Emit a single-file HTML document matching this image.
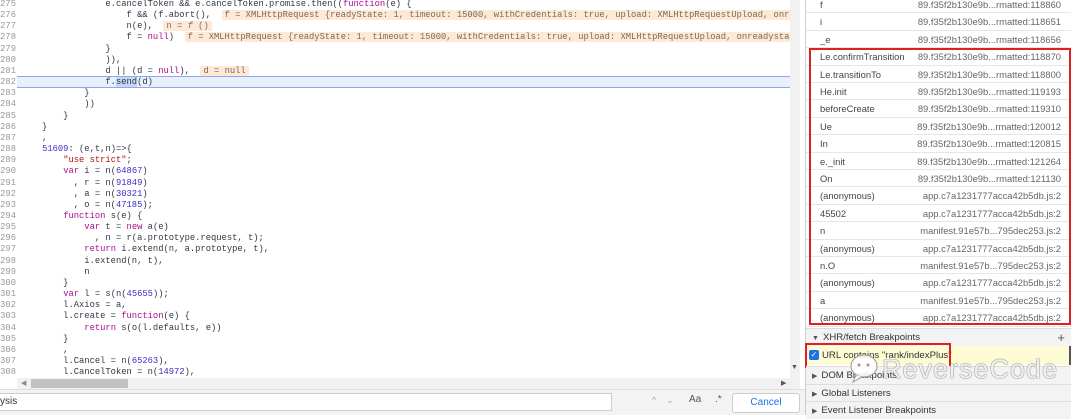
<!DOCTYPE html>
<html><head><meta charset="utf-8"><style>
*{margin:0;padding:0;box-sizing:border-box}
body{width:1080px;height:415px;overflow:hidden;background:#fff;position:relative;font-family:"Liberation Sans",sans-serif}
#ed{position:absolute;left:0;top:0;width:790px;height:378px;overflow:hidden;background:#fff}
.ln{position:absolute;left:0;width:16px;text-align:right;font:8.8px/11.15px "Liberation Mono",monospace;color:#999}
.cd{position:absolute;left:31.5px;white-space:pre;font:8.8px/11.15px "Liberation Mono",monospace;color:#303942}
.k{color:#aa0d91}.n{color:#3c2ec4}.s{color:#b31412}.v{color:#303942}
.iv{background:#fde9d6;color:#7a6a5a;padding:0 3px}
#hl{position:absolute;left:17px;top:76px;width:773px;height:12px;background:#e8efff;border-top:1px solid #8ea8ee;border-bottom:1px solid #8ea8ee}
#vs{position:absolute;left:790px;top:0;width:10px;height:378px;background:#f1f1f1}
#hs{position:absolute;left:17px;top:378px;width:783px;height:11px;background:#f1f1f1}
#hs i{position:absolute;left:14px;top:1px;width:97px;height:9px;background:#c1c1c1}
#sb{position:absolute;left:0;top:389px;width:805px;height:26px;background:#f3f3f3;border-top:1px solid #ddd}
#panel{position:absolute;left:805px;top:0;width:275px;height:415px;background:#fff;border-left:1px solid #ccc}
.r{position:absolute;left:0;width:265px;height:17.4px;border-bottom:1px solid #e6e6e6;font-size:9.4px;color:#444;line-height:17px}
.r .a{position:absolute;left:14px}.r .b{position:absolute;right:10px;color:#666}
.h{position:absolute;left:0;width:265px;height:17.5px;border-top:1px solid #ddd;background:#f3f3f3;font-size:9.6px;color:#333;line-height:17px;padding-left:6px}
.tri{font-size:7px;margin-right:4px;color:#555}
</style></head><body>
<div id="ed">
<div id="hl"></div>
<div class="ln" style="top:-1px">275<br>276<br>277<br>278<br>279<br>280<br>281<br>282<br>283<br>284<br>285<br>286<br>287<br>288<br>289<br>290<br>291<br>292<br>293<br>294<br>295<br>296<br>297<br>298<br>299<br>300<br>301<br>302<br>303<br>304<br>305<br>306<br>307<br>308<br>309</div>
<div class="cd" style="top:-1px">              e.cancelToken &amp;&amp; e.cancelToken.promise.then((<span class="k">function</span>(e) {
                  f &amp;&amp; (f.abort(),  <span class="iv">f = XMLHttpRequest {readyState: 1, timeout: 15000, withCredentials: true, upload: XMLHttpRequestUpload, onready</span>
                  n(e),  <span class="iv">n = <i>f</i> ()</span>
                  f = <span class="k">null</span>)  <span class="iv">f = XMLHttpRequest {readyState: 1, timeout: 15000, withCredentials: true, upload: XMLHttpRequestUpload, onreadystate</span>
              }
              )),
              d || (d = <span class="k">null</span>),  <span class="iv">d = null</span>
              f.<span style="background:#c6d6f7">send</span>(d)
          }
          ))
      }
  }
  ,
  <span class="n">51609</span>: (e,t,n)=&gt;{
      <span class="s">"use strict"</span>;
      <span class="k">var</span> i = n(<span class="n">64867</span>)
        , r = n(<span class="n">91849</span>)
        , a = n(<span class="n">30321</span>)
        , o = n(<span class="n">47185</span>);
      <span class="k">function</span> s(e) {
          <span class="k">var</span> t = <span class="k">new</span> a(e)
            , n = r(a.prototype.request, t);
          <span class="k">return</span> i.extend(n, a.prototype, t),
          i.extend(n, t),
          n
      }
      <span class="k">var</span> l = s(n(<span class="n">45655</span>));
      l.Axios = a,
      l.create = <span class="k">function</span>(e) {
          <span class="k">return</span> s(o(l.defaults, e))
      }
      ,
      l.Cancel = n(<span class="n">65263</span>),
      l.CancelToken = n(<span class="n">14972</span>),</div>
</div>
<div id="vs"><span style="position:absolute;left:1px;top:364px;font-size:7px;color:#555">▼</span></div>
<div id="hs"><span style="position:absolute;left:4px;top:1px;font-size:7px;color:#888">◀</span><i></i><span style="position:absolute;left:764px;top:1px;font-size:7px;color:#555">▶</span></div>
<div id="sb">
<div style="position:absolute;left:0;top:3px;width:612px;height:18px;background:#fff;border:1px solid #ccc;border-left:none;font-size:10px;line-height:16px;color:#333">ysis</div>
<span style="position:absolute;left:652px;top:5px;font-size:9px;color:#aaa">^&nbsp;&nbsp;&nbsp;&nbsp;⌄</span>
<span style="position:absolute;left:689px;top:4px;font-size:10px;color:#555">Aa</span>
<span style="position:absolute;left:715px;top:4px;font-size:10px;color:#555">.*</span>
<div style="position:absolute;left:732px;top:3px;width:68px;height:20px;background:#fff;border:1px solid #ccc;border-radius:3px;font-size:10px;line-height:18px;color:#1a73e8;text-align:center">Cancel</div>
</div>
<div id="panel">
<div class="r" style="top:-4px"><span class="a">f</span><span class="b">89.f35f2b130e9b...rmatted:118860</span></div>
<div class="r" style="top:13.4px"><span class="a">i</span><span class="b">89.f35f2b130e9b...rmatted:118651</span></div>
<div class="r" style="top:30.8px"><span class="a">_e</span><span class="b">89.f35f2b130e9b...rmatted:118656</span></div>
<div class="r" style="top:48.2px"><span class="a">Le.confirmTransition</span><span class="b">89.f35f2b130e9b...rmatted:118870</span></div>
<div class="r" style="top:65.6px"><span class="a">Le.transitionTo</span><span class="b">89.f35f2b130e9b...rmatted:118800</span></div>
<div class="r" style="top:83px"><span class="a">He.init</span><span class="b">89.f35f2b130e9b...rmatted:119193</span></div>
<div class="r" style="top:100.4px"><span class="a">beforeCreate</span><span class="b">89.f35f2b130e9b...rmatted:119310</span></div>
<div class="r" style="top:117.8px"><span class="a">Ue</span><span class="b">89.f35f2b130e9b...rmatted:120012</span></div>
<div class="r" style="top:135.2px"><span class="a">In</span><span class="b">89.f35f2b130e9b...rmatted:120815</span></div>
<div class="r" style="top:152.6px"><span class="a">e._init</span><span class="b">89.f35f2b130e9b...rmatted:121264</span></div>
<div class="r" style="top:170px"><span class="a">On</span><span class="b">89.f35f2b130e9b...rmatted:121130</span></div>
<div class="r" style="top:187.4px"><span class="a">(anonymous)</span><span class="b">app.c7a1231777acca42b5db.js:2</span></div>
<div class="r" style="top:204.8px"><span class="a">45502</span><span class="b">app.c7a1231777acca42b5db.js:2</span></div>
<div class="r" style="top:222.2px"><span class="a">n</span><span class="b">manifest.91e57b...795dec253.js:2</span></div>
<div class="r" style="top:239.6px"><span class="a">(anonymous)</span><span class="b">app.c7a1231777acca42b5db.js:2</span></div>
<div class="r" style="top:257px"><span class="a">n.O</span><span class="b">manifest.91e57b...795dec253.js:2</span></div>
<div class="r" style="top:274.4px"><span class="a">(anonymous)</span><span class="b">app.c7a1231777acca42b5db.js:2</span></div>
<div class="r" style="top:291.8px"><span class="a">a</span><span class="b">manifest.91e57b...795dec253.js:2</span></div>
<div class="r" style="top:309.2px"><span class="a">(anonymous)</span><span class="b">app.c7a1231777acca42b5db.js:2</span></div>
<div style="position:absolute;left:3px;top:48px;width:262px;height:277px;border:2px solid #e02020"></div>
<div class="h" style="top:328px"><span class="tri">▼</span>XHR/fetch Breakpoints<span style="position:absolute;right:6px;font-size:13px;color:#555">+</span></div>
<div style="position:absolute;left:0;top:345.5px;width:265px;height:19px;background:#fdfbd3;font-size:9.6px;line-height:19px;color:#333;padding-left:16px;border-right:2px solid #555"><span style="position:absolute;left:3px;top:4px;width:10px;height:10px;background:#1a73e8;border-radius:2px;color:#fff;font-size:8px;line-height:10px;text-align:center">✓</span>URL contains "rank/indexPlus"</div>
<div style="position:absolute;left:-1px;top:343px;width:146px;height:25px;border:2px solid #e02020"></div>
<div class="h" style="top:366px"><span class="tri">▶</span>DOM Breakpoints</div>
<div class="h" style="top:383.5px"><span class="tri">▶</span>Global Listeners</div>
<div class="h" style="top:401px"><span class="tri">▶</span>Event Listener Breakpoints</div>
<svg style="position:absolute;left:42px;top:352px" width="36" height="32" viewBox="0 0 36 32"><ellipse cx="16" cy="14" rx="13" ry="11" fill="rgba(255,255,255,.85)" stroke="#999" stroke-width="1"/><path d="M8 23 L5 30 L14 25" fill="rgba(255,255,255,.85)" stroke="#999"/><circle cx="11" cy="13" r="1.5" fill="#999"/><circle cx="20" cy="13" r="1.5" fill="#999"/></svg>
<div style="position:absolute;left:76px;top:354px;font-size:27px;color:rgba(255,255,255,.9);letter-spacing:1px;text-shadow:0 0 1px #666,0 0 1px #666">ReverseCode</div>
</div>
</body></html>
